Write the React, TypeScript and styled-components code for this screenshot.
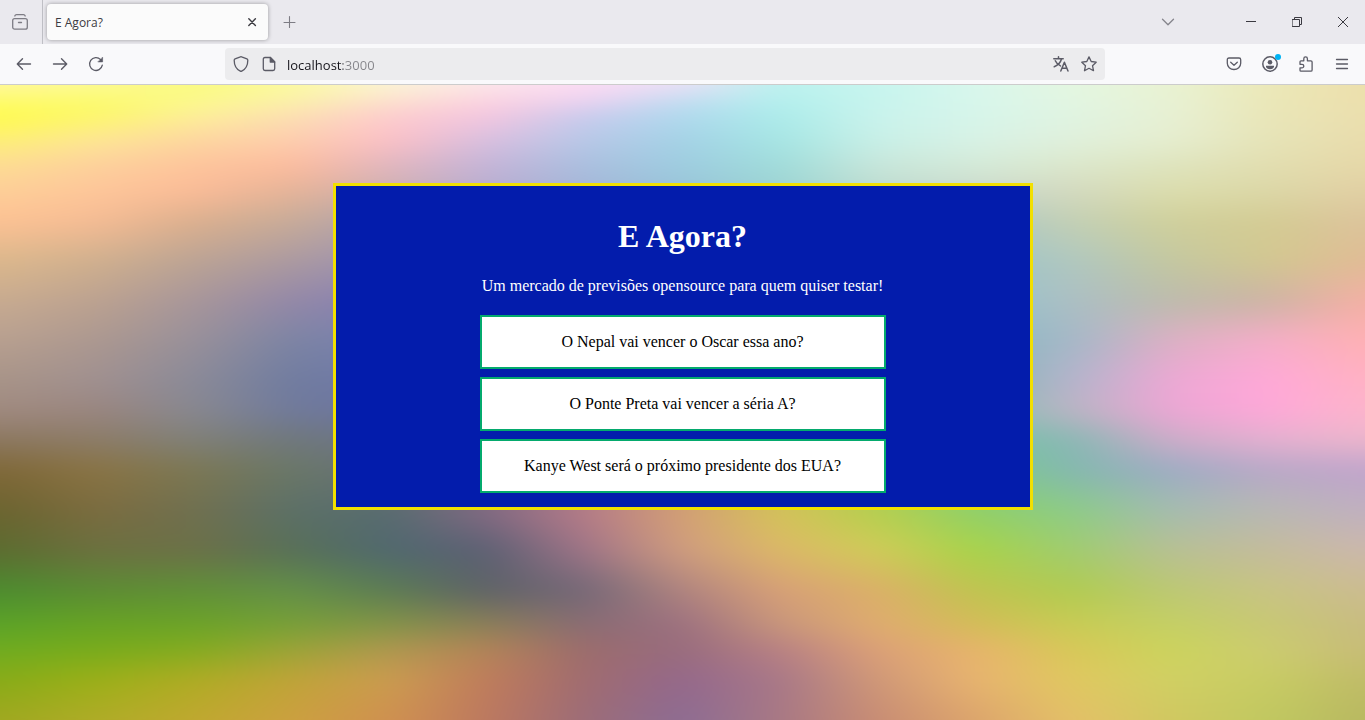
import React from "react";
import styled, { createGlobalStyle } from "styled-components";

const GlobalStyle = createGlobalStyle`
  *, *::before, *::after { box-sizing: border-box; }
  html, body, #root { height: 100%; }
  body { margin: 0; }
  button { font: inherit; color: inherit; border: 0; padding: 0; background: none; }
`;

const Window = styled.div`
  display: flex;
  flex-direction: column;
  min-height: 100%;
  color: #5b5b66;
  font-family: "Open Sans", "Noto Sans", sans-serif;
  font-size: 12px;
`;

const TabStrip = styled.header`
  display: flex;
  align-items: center;
  height: 44px;
  background: #eae9ee;
`;

const ViewSlot = styled.div`
  display: flex;
  align-items: center;
  align-self: stretch;
  padding: 0 6px 0 4px;
  margin-right: 4px;
  border-right: 1px solid #bfbfc5;
  color: #7d7c84;
`;

const IconButton = styled.button<{ $wide?: boolean }>`
  position: relative;
  display: flex;
  align-items: center;
  justify-content: center;
  width: ${(p) => (p.$wide ? 46 : 32)}px;
  height: 32px;
  flex: none;
  svg { display: block; }
`;

const Tab = styled.div`
  display: flex;
  align-items: center;
  width: 221px;
  height: 36px;
  padding: 0 0 0 8px;
  border-radius: 4px;
  background: #fbfbfb;
  box-shadow: 0 0 4px rgba(0, 0, 0, 0.35);
  color: #3c3b42;
`;

const TabTitle = styled.button`
  flex: 1;
  height: 36px;
  text-align: left;
`;

const TabControls = styled.div`
  display: flex;
  align-items: center;
  margin-left: 6px;
  color: #7d7c84;
`;

const WindowControls = styled.div`
  display: flex;
  margin-left: auto;
  margin-right: -1px;
  color: #3a3940;
`;

const MenuSlot = styled.div`
  margin-right: 44px;
  color: #85848b;
`;

const Toolbar = styled.nav`
  display: flex;
  align-items: center;
  justify-content: space-between;
  height: 41px;
  padding: 0 7px 0 8px;
  border-bottom: 1px solid #cccccc;
  background: #f9f9fb;
`;

const ButtonGroup = styled.div`
  display: flex;
  gap: 4px;
`;

const AddressBar = styled.form`
  display: flex;
  align-items: center;
  flex: 0 1 880px;
  height: 32px;
  padding: 0 2px;
  border-radius: 4px;
  background: #ececee;
`;

const AddressButton = styled(IconButton)`
  width: 28px;
`;

const AddressInput = styled.input`
  flex: 1;
  min-width: 0;
  height: 32px;
  margin-left: 4px;
  padding: 2px 0 0;
  border: 0;
  outline: 0;
  font-family: inherit;
  font-size: 13px;
  background: linear-gradient(to right, #15141a 56px, #85858a 56px);
  background-clip: text;
  -webkit-text-fill-color: transparent;
`;

const Badge = styled.span`
  position: absolute;
  top: 6px;
  right: 5px;
  width: 6px;
  height: 6px;
  border-radius: 50%;
  background: #00b3f4;
`;

const Page = styled.main`
  position: relative;
  flex: 1;
  display: flex;
  justify-content: center;
  align-items: flex-start;
  padding: 98px 16px 16px;
  overflow: hidden;
  font-family: "Liberation Serif", "Times New Roman", serif;
  font-size: 16px;
  line-height: 18px;
`;

const BackdropSvg = styled.svg`
  position: absolute;
  inset: 0;
  width: 100%;
  height: 100%;
`;

const Card = styled.section`
  position: relative;
  width: 100%;
  max-width: 700px;
  padding: 32px 16px 14px;
  border: 3px solid #f2e000;
  background: #031cac;
  color: #fff;
  text-align: center;
`;

const Title = styled.h1`
  margin: 0 0 22px;
  font-size: 32px;
  line-height: 37px;
`;

const Intro = styled.p`
  margin: 0 0 20px;
`;

const Questions = styled.ul`
  display: flex;
  flex-direction: column;
  gap: 8px;
  max-width: 406px;
  margin: 0 auto;
  padding: 0;
  list-style: none;
`;

const Question = styled.button`
  display: block;
  width: 100%;
  padding: 16px;
  border: 2px solid #04aa6d;
  background: #fff;
  color: #000;
`;

/* Colour mesh: each row is a vertical position followed by evenly spaced colours. */
const mesh: [number, string][] = [
  [0, "fff8a0 fdf998 fafa80 fbfaa0 fbf5d8 fbe8ec fcdcf4 efe0f6 bcf2ee c8f5ee d8f7ec e4f6e0 e9f2d2 ebe8b8 ecdfac"],
  [14, "fefb70 fbfb6c fbfb88 fbf4a8 fce4cc fdd4e0 f4d2f0 c4dcf2 b4f0ee c6f4ee d8f6ec e3f6e2 e8f2d4 ebe8b8 ecdfac"],
  [30, "fffc48 fdf868 fdf09a fcdfb4 fdccd0 f6c6e0 c8cbee b0daee acecea caf3ec d6f5ea e0f4e2 e7f0d4 e9e6b8 ebdfae"],
  [55, "fdf078 fde698 fdd6a0 fdcdae fdc0c6 d8bfe0 b8c8e8 a4d2e6 a6e6e4 c8f0e8 d8f2e6 e0f0dc e6eed0 e6e4b8 e9dcac"],
  [80, "fddc94 fdd09c fdc49c fdbc9e e0b6c0 c4b4d8 aabfdf 9ecde0 a0dcda c8e6da d4ead8 dce8cc dee4be e2deb0 e6d8a8"],
  [105, "fdcf98 fec69a fcbc98 e6b498 d0b0b0 b8acd0 a4b6d8 98c4d8 9cd4d2 bedcd0 ccdacc d4dac0 dcdeae dcd8a8 e2d0a4"],
  [135, "fec294 f6bc94 dcb08e c8ac98 b0a2b0 b0a8c8 a4b0d0 98bcd0 9cccd0 a8ccc8 acc8c8 c4d0b4 d0d09c d4cc94 dcc49c"],
  [175, "dcb88c d0b08e bca494 ac9aa0 9c92b4 9c92b4 9c92b4 98b0c8 98b0c8 98b0c8 9cc4c8 b0c8c0 c4c8a0 d2c890 e0bc94"],
  [215, "c8ab90 bca290 a8969a 9488a8 8680b4 8680b4 8680b4 8680b4 94a8c0 94b8c8 94c4cc acbfc4 bcbcac ccb4a4 f4b0a4"],
  [255, "b8a090 ac9890 98909a 7c84a4 7880b0 7880b0 7880b0 7880b0 88a0b0 88b0b8 88b8c0 a4b8c8 dcb0c4 f4aec8 ffb0b4"],
  [295, "a89488 a09090 8a8a98 707ca0 7078a8 7078a8 7078a8 7078a8 80a0a8 80b0b0 84b4b4 b4b4cc eca8d4 ffa8d8 ffb2c4"],
  [325, "a08a80 9a8680 888890 707a9c 6c74a0 6c74a0 6c74a0 7078a8 80a0a8 80b0b0 88c0b4 bcb4c4 eca6d4 fea8d8 fdb4cc"],
  [355, "8c7860 8c7c68 808078 70787c 6c7488 6c7488 80748c a08890 a0a888 90b890 78c4a8 88b8b4 ccacc8 e4b0d0 ecb6cc"],
  [385, "806838 8a7444 7c7854 6a7868 687078 68687c 98748c c09080 c8b068 acc870 7ccc8c 84b8b0 9cacc4 b8a8c8 c0a4cc"],
  [425, "6c6430 7c6c40 707050 5c7068 586c70 866a84 b87c88 d4a074 d4c458 b4d04c 90d068 8ccc88 a4bcb0 b8b8b4 c0b0c0"],
  [465, "5c6c30 6c7040 6c7048 587058 506870 5c6074 a07488 d09c80 ddb868 d0cc58 a8d448 a0cc70 b8c094 c4bc9c ccb8ac"],
  [505, "4c8c30 5c8c34 609038 649048 5c7c54 5e6268 746878 b08480 d8a078 dcb068 c0c450 b0cc50 bcc874 c8c484 ccbc90"],
  [540, "5ca428 68a424 6ca428 78a038 849448 8c8058 8a6c74 9c7080 c8967c e0ac70 d4bc58 c8cc54 c4d064 c8c874 c8bc80"],
  [565, "70ac20 78ac1c 84ac20 9ca438 b09850 b48458 9c6c6c 986c7e b88084 dca078 e8b46c d8c858 ccd45c cccc70 c8bc78"],
  [595, "88ac18 9cb018 b0ac24 c0a438 cc9c50 c07c5c a06c70 94688c a87888 d09878 e8b470 e0c860 d0d064 c8cc64 c0bc68"],
  [635, "a0a820 b0ac28 c0a830 cca040 d09050 bc7860 9c6c78 8c6c94 a87884 c88c74 dca46c e4c068 d0c860 c0c860 b8b860"],
];

const Backdrop = () => (
  <BackdropSvg viewBox="0 0 1365 635" preserveAspectRatio="none" aria-hidden="true">
    <defs>
      <filter
        id="soften"
        filterUnits="userSpaceOnUse"
        x="-80"
        y="-80"
        width="1525"
        height="795"
        colorInterpolationFilters="sRGB"
      >
        <feGaussianBlur stdDeviation="20 10" />
      </filter>
      {mesh.map(([y, colours], i) => (
        <React.Fragment key={y}>
          <linearGradient id={`row${i}`} gradientUnits="userSpaceOnUse" x1="0" x2="1365" y1="0" y2="0">
            {colours.split(" ").map((c, j, all) => (
              <stop key={j} offset={j / (all.length - 1)} stopColor={`#${c}`} />
            ))}
          </linearGradient>
          {i > 0 && (
            <>
              <linearGradient id={`fade${i}`} gradientUnits="userSpaceOnUse" x1="0" x2="0" y1={mesh[i - 1][0]} y2={y}>
                <stop offset="0" stopColor="#fff" stopOpacity="0" />
                <stop offset="1" stopColor="#fff" />
              </linearGradient>
              <mask id={`mask${i}`} maskUnits="userSpaceOnUse" x="-80" y="-80" width="1525" height="795">
                <rect x="-80" y="-80" width="1525" height="795" fill={`url(#fade${i})`} />
              </mask>
            </>
          )}
        </React.Fragment>
      ))}
    </defs>
    <g filter="url(#soften)">
      {mesh.map(([y], i) => (
        <rect
          key={y}
          x="-80"
          y="-80"
          width="1525"
          height="795"
          fill={`url(#row${i})`}
          mask={i > 0 ? `url(#mask${i})` : undefined}
        />
      ))}
    </g>
  </BackdropSvg>
);

type IconProps = { size?: number; weight?: number; children: React.ReactNode };

const Icon = ({ size = 16, weight = 1.3, children }: IconProps) => (
  <svg
    width={size}
    height={size}
    viewBox={`0 0 ${size} ${size}`}
    fill="none"
    stroke="currentColor"
    strokeWidth={weight}
    strokeLinecap="round"
    strokeLinejoin="round"
    aria-hidden="true"
  >
    {children}
  </svg>
);

const questions = [
  "O Nepal vai vencer o Oscar essa ano?",
  "O Ponte Preta vai vencer a séria A?",
  "Kanye West será o próximo presidente dos EUA?",
];

export default function App() {
  return (
    <Window>
      <GlobalStyle />
      <TabStrip>
        <ViewSlot>
          <IconButton aria-label="Firefox View">
            <Icon weight={1.3}>
              <path d="M2.8 2Q3.2.7 4.5.7h7q1.3 0 1.700 1.300" />
              <rect x=".7" y="4.600" width="14.600" height="10.600" rx="2" />
              <path d="M6.500 8.500h3" />
            </Icon>
          </IconButton>
        </ViewSlot>
        <Tab>
          <TabTitle>E Agora?</TabTitle>
          <IconButton aria-label="Fechar aba">
            <Icon weight={1.4}>
              <path d="m4.800 4.800 6.600 6.600m0-6.600-6.600 6.600" />
            </Icon>
          </IconButton>
        </Tab>
        <TabControls>
          <IconButton aria-label="Nova aba">
            <Icon weight={1.1}>
              <path d="M7.500 2.500v11M2 8.500h11" />
            </Icon>
          </IconButton>
        </TabControls>
        <WindowControls>
          <MenuSlot>
            <IconButton aria-label="Listar abas">
              <Icon weight={1.3}>
                <path d="m2.500 5.300 5.500 5.400 5.500-5.400" />
              </Icon>
            </IconButton>
          </MenuSlot>
          <IconButton $wide aria-label="Minimizar">
            <Icon size={10} weight={1}>
              <path d="M0 4.500h10" strokeLinecap="butt" />
            </Icon>
          </IconButton>
          <IconButton $wide aria-label="Restaurar">
            <Icon size={10} weight={1}>
              <path d="M.5 2.500h7v7h-7zM2.500 2.500v-2h7v7h-2" strokeLinejoin="miter" />
            </Icon>
          </IconButton>
          <IconButton $wide aria-label="Fechar">
            <Icon size={10} weight={1}>
              <path d="m0 0 10 10M10 0 0 10" strokeLinecap="butt" />
            </Icon>
          </IconButton>
        </WindowControls>
      </TabStrip>

      <Toolbar>
        <ButtonGroup>
          <IconButton aria-label="Voltar">
            <Icon weight={1.4}>
              <path d="M14.500 8h-13M6.500 2.800 1.300 8l5.200 5.200" />
            </Icon>
          </IconButton>
          <IconButton aria-label="Avançar">
            <Icon weight={1.4}>
              <path d="M1.500 8h13M9.500 2.800 14.700 8l-5.200 5.200" />
            </Icon>
          </IconButton>
          <IconButton aria-label="Recarregar">
            <Icon weight={1.3}>
              <path d="M14.300 9.200A6.400 6.400 0 1 1 12.600 3.600" />
              <path d="M14.600 1.500v4.400h-4.400z" fill="currentColor" strokeWidth=".6" />
            </Icon>
          </IconButton>
        </ButtonGroup>

        <AddressBar onSubmit={(e) => e.preventDefault()}>
          <AddressButton type="button" aria-label="Proteção">
            <Icon weight={1.3}>
              <path d="M7.400.8Q8 .5 8.600.8l5.300 2.100q.9.4.9 1.300c0 5.400-1.800 8.800-6.100 10.900q-.7.3-1.400 0C3 13 1.200 9.600 1.200 4.200q0-.9.9-1.300z" />
            </Icon>
          </AddressButton>
          <AddressButton type="button" aria-label="Informações do site">
            <Icon weight={1.3}>
              <path d="M9.300 1.500H4Q2.300 1.500 2.300 3.200v9.600q0 1.700 1.700 1.700h8q1.700 0 1.700-1.700V6z" />
              <path d="M9.300 1.500V6h4.400z" fill="currentColor" />
            </Icon>
          </AddressButton>
          <AddressInput aria-label="Endereço" defaultValue="localhost:3000" spellCheck={false} />
          <AddressButton type="button" aria-label="Traduzir">
            <Icon weight={1.5}>
              <path d="M.8 2.700h9.400M5.500.8v1.900M2.300 4.800c1.200 2.700 3.200 4.300 5.200 5.100M8.600 2.800C7.500 6.600 4.500 9.500 1.200 10.800" />
              <path d="m7.800 15 3.600-8.700L15 15M9 12.300h4.900" />
            </Icon>
          </AddressButton>
          <AddressButton type="button" aria-label="Favoritar">
            <Icon weight={1.3}>
              <path d="m8 .9 2.200 4.600 5 .7-3.700 3.500 1 5L8 12.300l-4.500 2.400 1-5L.8 6.200l5-.7z" />
            </Icon>
          </AddressButton>
        </AddressBar>

        <ButtonGroup>
          <IconButton aria-label="Pocket">
            <Icon weight={1.3}>
              <path d="M3 2h10q1.700 0 1.700 1.700v3.600a6.700 6.200 0 0 1-13.400 0V3.700Q1.300 2 3 2z" />
              <path d="m4.700 6.300 3.300 3 3.300-3" />
            </Icon>
          </IconButton>
          <IconButton aria-label="Conta">
            <Icon weight={1.5}>
              <circle cx="8" cy="8" r="7.200" />
              <circle cx="8" cy="6.200" r="2.300" fill="currentColor" stroke="none" />
              <path d="M4 9.800h8v.8c0 1.600-1.900 2.600-4 2.600s-4-1-4-2.600z" fill="currentColor" stroke="none" />
            </Icon>
            <Badge />
          </IconButton>
          <IconButton aria-label="Extensões">
            <Icon weight={1.3}>
              <path d="M2 6.500V5.800q0-1 1-1h2.800V2.700a1.800 1.800 0 0 1 3.600 0v2.100h3.500q1.200 0 1.200 1.200v8q0 1.200-1.200 1.200H3q-1 0-1-1v-2.300h2a1.800 1.800 0 0 0 0-3.600H2z" />
            </Icon>
          </IconButton>
          <IconButton aria-label="Menu">
            <Icon weight={1.3}>
              <path d="M2.500 3.500h11M2.500 8h11M2.500 12.500h11" />
            </Icon>
          </IconButton>
        </ButtonGroup>
      </Toolbar>

      <Page>
        <Backdrop />
        <Card>
          <Title>E Agora?</Title>
          <Intro>Um mercado de previsões opensource para quem quiser testar!</Intro>
          <Questions>
            {questions.map((q) => (
              <li key={q}>
                <Question>{q}</Question>
              </li>
            ))}
          </Questions>
        </Card>
      </Page>
    </Window>
  );
}
